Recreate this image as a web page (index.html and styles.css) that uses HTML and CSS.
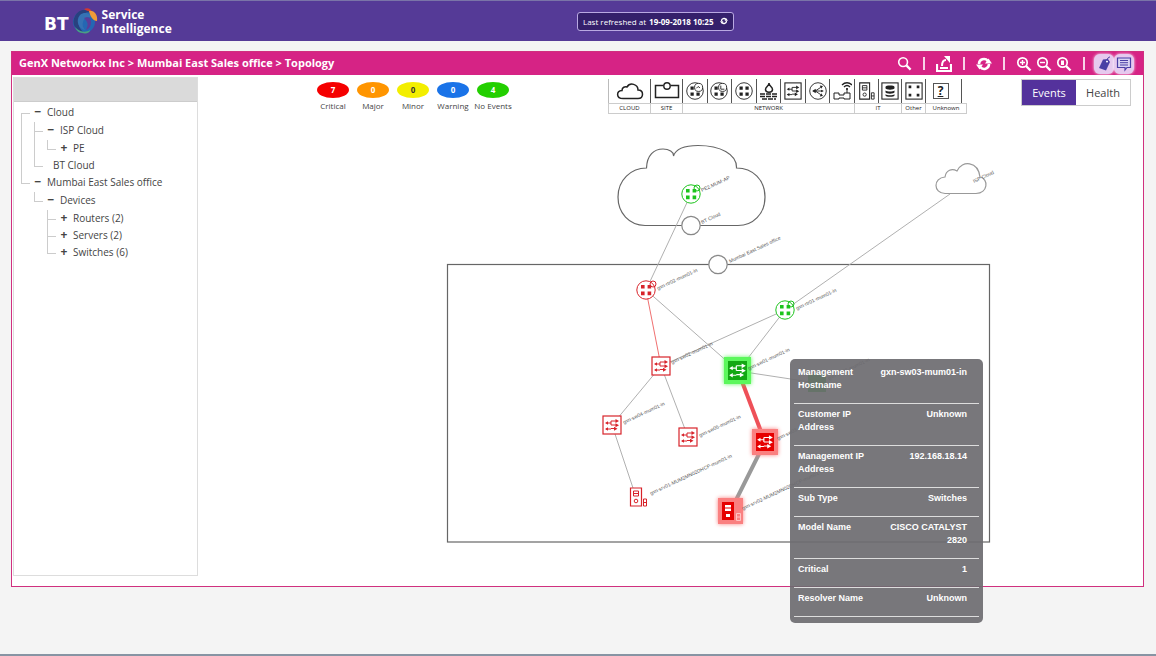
FILE: index.html
```html
<!DOCTYPE html>
<html lang="en">
<head>
  <meta charset="UTF-8" />
  <meta name="viewport" content="width=device-width, initial-scale=1.0"/>
  <title>Service Intelligence - Topology</title>
  <link rel="stylesheet" href="styles.css">
</head>
<body>
  <!-- Shared icon shapes -->
  <svg class="defs" width="0" height="0">
    <defs>
      <symbol id="router" viewBox="0 0 20 20">
        <circle cx="10" cy="10" r="9.2" fill="none" stroke="currentColor"/>
        <path d="M5 5h3.6v3.6H5zM11.6 5h3.6v3.6h-3.6zM5 11.6h3.6v3.6H5zM11.6 11.6h3.6v3.6h-3.6z" fill="currentColor"/>
      </symbol>
      <symbol id="switch" viewBox="0 0 20 20">
        <rect x="1" y="1" width="18" height="18" fill="none" stroke="currentColor" stroke-width="1.2"/>
        <path d="M5 8h4M9 6h5M9 10h6M4 14h5M9 13.500h4M9 6v4" fill="none" stroke="currentColor"/>
        <path d="M13.500 4l3.500 2-3.500 2zM13.500 8.200l3.500 2-3.500 2zM6 6.200v3.600L3 8zM6 12.200v3.600L3 14zM12 11.700l3.500 2-3.500 2z" fill="currentColor"/>
      </symbol>
      <symbol id="server" viewBox="0 0 20 20">
        <path d="M3 1h11v18H3z" fill="none" stroke="currentColor" stroke-width="1.2"/>
        <path d="M6 4h5v5H6zM6 6.5h5" fill="none" stroke="currentColor"/>
        <circle cx="8.5" cy="14" r="1.8" fill="none" stroke="currentColor"/>
        <path d="M16 12h3v7h-3zM16 15.5h3" fill="none" stroke="currentColor"/>
      </symbol>
      <symbol id="zoom" viewBox="0 0 16 16">
        <circle cx="6.5" cy="6.5" r="4.7" fill="none" stroke="currentColor" stroke-width="1.7"/>
        <path d="M10 10l4.5 4.5" stroke="currentColor" stroke-width="2.4"/>
      </symbol>
      <symbol id="refresh" viewBox="0 0 16 16">
        <path d="M3 8c0-5 6-6.500 9-3M13 8c0 5-6 6.500-9 3" fill="none" stroke="currentColor" stroke-width="2.600"/>
        <path d="M9 7.500h7l-3.500-5zM0 8.500h7l-3.500 5z" fill="currentColor"/>
      </symbol>
    </defs>
  </svg>

  <header class="header">
    <div class="brand">
      <span class="brand-bt">BT</span>
      <svg class="globe" viewBox="0 0 28 28">
        <circle cx="13" cy="15" r="11" fill="#2467b3"/>
        <path d="M4 9C8 2 15 2 19 5c-5 0-10 3-11 9-1 4 1 8 4 11C4 24 0 16 4 9z" fill="#28417f"/>
        <path d="M9 8c5-4 11-1 13 3-4-2-9-1-10 4-1 3 0 6 2 8-6-1-10-9-5-15z" fill="#3572b4"/>
        <path d="M13 11c4-2 7 0 7 4s-2 7-5 8c2-4 2-6 1-8-1-2-2-3-3-4z" fill="#5a3d9b"/>
        <path d="M13 2c4-2 7 0 8 3-3-1-5-1-8-3z" fill="#d6372e"/>
        <path d="M18 4c5-1 9 4 8 10-4 0-7-5-8-10z" fill="#f19b38"/>
        <path d="M4 20c4 5 11 6 15 3 0 3-4 4-8 3-3 0-6-3-7-6z" fill="#4aa083"/>
      </svg>
      <span class="brand-name">Service<br>Intelligence</span>
    </div>
    <button class="refreshed">Last refreshed at <b>19-09-2018 10:25</b>
      <svg width="8" height="8"><use href="#refresh"/></svg>
    </button>
  </header>

  <main class="panel">
    <div class="title-bar">
      <h1>GenX Networkx Inc &gt; Mumbai East Sales office &gt; Topology</h1>
      <div class="tools">
        <button aria-label="Search"><svg width="15" height="15"><use href="#zoom"/></svg></button>
        <i class="sep"></i>
        <button aria-label="Export">
          <svg width="16" height="16" viewBox="0 0 16 16"><path d="M1 8v7h14V8M4 12h8" fill="none" stroke="currentColor" stroke-width="2.200"/><path d="M6 10c0-4 2-6 4-6" fill="none" stroke="currentColor" stroke-width="2"/><path d="M8 0h6v7z" fill="currentColor"/></svg>
        </button>
        <i class="sep"></i>
        <button aria-label="Refresh"><svg width="16" height="16"><use href="#refresh"/></svg></button>
        <i class="sep"></i>
        <button aria-label="Zoom in">
          <svg width="16" height="16" viewBox="0 0 16 16"><use href="#zoom"/><path d="M4 6.500h5M6.500 4v5" stroke="currentColor" stroke-width="1.400"/></svg>
        </button>
        <button aria-label="Zoom out">
          <svg width="16" height="16" viewBox="0 0 16 16"><use href="#zoom"/><path d="M4 6.500h5" stroke="currentColor" stroke-width="1.400"/></svg>
        </button>
        <button aria-label="Reset zoom">
          <svg width="16" height="16" viewBox="0 0 16 16"><use href="#zoom"/><path d="M5 4.500h3v4.500H5z" fill="currentColor"/></svg>
        </button>
        <i class="sep"></i>
        <button class="on" aria-label="Labels">
          <svg width="16" height="16" viewBox="0 0 16 16"><path d="M7 3.500l5-.5 2 3-4 8.500L3 12z" fill="currentColor"/><circle cx="11" cy="5.500" r="1" fill="#fff"/><path d="M11 5c0-3 2-4 3-4" fill="none" stroke="currentColor"/></svg>
        </button>
        <button class="on" aria-label="Tooltips">
          <svg width="16" height="16" viewBox="0 0 16 16"><path d="M1.500 2h13v9.500H11L9 14v-2.500H1.500z" fill="#d9d3f2" stroke="currentColor" stroke-width="1.200"/><path d="M4 4.500h8M4 6.700h8M4 9h8" stroke="currentColor"/></svg>
        </button>
      </div>
    </div>

    <div class="content">
      <nav class="sidebar">
        <div class="sidebar-head"></div>
        <ul class="tree">
          <li><button>−</button>Cloud
            <ul>
              <li><button>−</button>ISP Cloud
                <ul>
                  <li><button>+</button>PE</li>
                </ul>
              </li>
              <li class="leaf">BT Cloud</li>
            </ul>
          </li>
          <li><button>−</button>Mumbai East Sales office
            <ul>
              <li><button>−</button>Devices
                <ul>
                  <li><button>+</button>Routers (2)</li>
                  <li><button>+</button>Servers (2)</li>
                  <li><button>+</button>Switches (6)</li>
                </ul>
              </li>
            </ul>
          </li>
        </ul>
      </nav>

      <section class="topology">
        <div class="bar">
          <ul class="legend">
            <li><b class="critical">7</b>Critical</li>
            <li><b class="major">0</b>Major</li>
            <li><b class="minor">0</b>Minor</li>
            <li><b class="warning">0</b>Warning</li>
            <li><b class="none">4</b>No Events</li>
          </ul>

          <div class="palette">
            <div class="group cloud">
              <div class="icons"><span><svg width="28" height="20" viewBox="0 0 28 20"><path d="M7 17.500C0 17.500 0 10 6 9.500 6 6 9 5.500 11 6c3-5 11-3 11 3 6 0 6 8.500 0 8.500z" fill="none" stroke="currentColor" stroke-width="1.500"/></svg></span></div>
              <div class="caption">CLOUD</div>
            </div>
            <div class="group site">
              <div class="icons"><span><svg width="26" height="20" viewBox="0 0 26 20"><path d="M9.500 4.500H1.500v12h23v-12h-8" fill="none" stroke="currentColor" stroke-width="1.500"/><circle cx="13" cy="5" r="3.200" fill="none" stroke="currentColor" stroke-width="1.400"/></svg></span></div>
              <div class="caption">SITE</div>
            </div>
            <div class="group network">
              <div class="icons">
                <span><svg width="18" height="18" viewBox="0 0 20 20"><use href="#router"/><circle cx="14" cy="6" r="4.500" fill="#fff" stroke="currentColor"/><path d="M11.500 7l2-2 2 1.500" fill="none" stroke="currentColor"/></svg></span>
                <span><svg width="18" height="18" viewBox="0 0 20 20"><use href="#router"/><circle cx="14" cy="6" r="4.500" fill="#fff" stroke="currentColor"/><path d="M12 4v4h4" fill="none" stroke="currentColor"/></svg></span>
                <span><svg width="18" height="18"><use href="#router"/></svg></span>
                <span><svg width="20" height="20" viewBox="0 0 20 20"><path d="M10 2c0 3-3.500 4-3.500 6.500 0 3.500 7 3.500 7 0C13.500 6 10 5 10 2z" fill="none" stroke="currentColor" stroke-width="1.500"/><path d="M1 13h18M1 15.500h18M3 18h14" stroke="currentColor" stroke-width="1.500" stroke-dasharray="5 1"/></svg></span>
                <span><svg width="18" height="18"><use href="#switch"/></svg></span>
                <span><svg width="18" height="18" viewBox="0 0 20 20"><circle cx="10" cy="10" r="9.200" fill="none" stroke="currentColor"/><path d="M5 10h10M7 10l6-4M7 10l6 4" fill="none" stroke="currentColor"/><path d="M3.500 10l4-2.500v5zM12 4l3.500.5-2 3zM12 16l3.500-.5-2-3zM13.500 8.500l3 1.500-3 1.500z" fill="currentColor"/></svg></span>
                <span><svg width="20" height="20" viewBox="0 0 20 20"><path d="M2 12h5v2h5v-2h6v6h-6v-1H7v1H2zM15 12V7" fill="none" stroke="currentColor"/><path d="M10 4c3-3 7-3 10 0M12 6c2-2 4-2 6 0" fill="none" stroke="currentColor" stroke-width="1.300"/><circle cx="15" cy="8" r="1" fill="currentColor"/></svg></span>
              </div>
              <div class="caption">NETWORK</div>
            </div>
            <div class="group it">
              <div class="icons">
                <span><svg width="18" height="18"><use href="#server"/></svg></span>
                <span><svg width="18" height="18" viewBox="0 0 20 20"><rect x="1" y="1" width="18" height="18" fill="none" stroke="currentColor" stroke-width="1.200"/><path d="M5 5.500c0-2 10-2 10 0v1.500c0 2-10 2-10 0zM5 9.500c2 1.500 8 1.500 10 0v2c0 2-10 2-10 0zM5 13.500c2 1.500 8 1.500 10 0v1.500c0 2-10 2-10 0z" fill="currentColor"/></svg></span>
              </div>
              <div class="caption">IT</div>
            </div>
            <div class="group other">
              <div class="icons"><span><svg width="18" height="18" viewBox="0 0 20 20"><rect x="1" y="1" width="18" height="18" fill="none" stroke="currentColor" stroke-width="1.200"/><path d="M4 4h3v3H4zM13 4h3v3h-3zM4 13h3v3H4zM13 13h3v3h-3z" fill="currentColor"/></svg></span></div>
              <div class="caption">Other</div>
            </div>
            <div class="group unknown">
              <div class="icons"><span><i class="question">?</i></span></div>
              <div class="caption">Unknown</div>
            </div>
          </div>

          <div class="tabs">
            <button class="active">Events</button>
            <button>Health</button>
          </div>
        </div>

        <div class="canvas">
          <svg class="map" viewBox="199 116 944 470">
            <!-- Cloud and site outlines -->
            <g class="outline">
              <path d="M645 225.500C629 225 618 213 618 197C618 180 631 168 646.500 168C647 155 654 149 663 149C669 149 674 152 673.500 156C676 148 686 145.500 698 145.500C720 145.500 737 154 736.500 168C753 168 765 180 765 197C765 214 753 225.500 738 225.500Z"/>
              <rect x="447.500" y="264.500" width="542" height="277.500"/>
              <path class="thin" d="M945 193.500C933 193 933 178 945 177C946 170 952 168 957 171C962 160 978 161 980 177C989 179 988 193 976 193.500Z"/>
            </g>

            <!-- Links -->
            <g class="links">
              <path d="M691 194L646 290L738 371L785 310L950 194M785 310L661 366L612 425L636 497M661 366L688 437M738 371L817 383"/>
              <path class="red" d="M646 290L661 366"/>
              <path class="wide-red" d="M738 371L765 442"/>
              <path class="wide" d="M765 442L730 512"/>
            </g>

            <g class="outline ports">
              <circle cx="691" cy="225.500" r="9.200"/>
              <circle cx="718" cy="264.500" r="9.200"/>
            </g>

            <!-- Nodes -->
            <g class="green">
              <circle cx="691" cy="194" r="9" fill="#fff"/>
              <use href="#router" x="681" y="184" width="20" height="20"/>
              <circle class="mark" cx="697" cy="188" r="3"/>
              <circle cx="785" cy="310" r="9" fill="#fff"/>
              <use href="#router" x="775" y="300" width="20" height="20"/>
              <circle class="mark" cx="791" cy="304" r="3"/>
              <rect class="solid" x="808" y="374" width="18" height="18"/>
            </g>
            <g class="red-node">
              <circle cx="646" cy="290" r="9" fill="#fff"/>
              <use href="#router" x="636" y="280" width="20" height="20"/>
              <circle class="mark" cx="653" cy="284" r="3"/>
              <rect x="652" y="357" width="18" height="18" fill="#fff"/>
              <use href="#switch" x="651" y="356" width="20" height="20"/>
              <rect x="603" y="416" width="18" height="18" fill="#fff"/>
              <use href="#switch" x="602" y="415" width="20" height="20"/>
              <rect x="679" y="428" width="18" height="18" fill="#fff"/>
              <use href="#switch" x="678" y="427" width="20" height="20"/>
              <rect x="629" y="488" width="13" height="18" fill="#fff"/>
              <use href="#server" x="627" y="487" width="21" height="20"/>
            </g>

            <!-- Highlighted path -->
            <rect class="glow-green" x="724" y="357" width="27" height="27"/>
            <rect x="728" y="361" width="19" height="19" fill="#12a812"/>
            <svg class="white" x="728" y="361" width="19" height="19" viewBox="2 2 16 16"><use href="#switch" width="20" height="20"/></svg>
            <rect class="glow-red" x="752" y="429" width="26" height="26"/>
            <rect x="756" y="433" width="18" height="18" fill="#e60000"/>
            <svg class="white" x="756" y="433" width="18" height="18" viewBox="2 2 16 16"><use href="#switch" width="20" height="20"/></svg>
            <rect class="glow-red" x="718" y="498" width="25" height="26"/>
            <rect x="722" y="502" width="12" height="18" fill="#e60000"/>
            <path d="M725 505h6v6h-6zM726 514h4v3h-4z" fill="#fff"/>
            <path d="M725 508h6" stroke="#e60000"/>
            <path d="M736.500 513.500h4v7h-4zM736.500 517h4" fill="none" stroke="#ffc4c4"/>

            <!-- Node names -->
            <g class="names">
              <text transform="translate(702 192) rotate(-25)">PE2.MUM-AP</text>
              <text transform="translate(702 224) rotate(-25)">BT Cloud</text>
              <text transform="translate(730 263) rotate(-25)">Mumbai East Sales office</text>
              <text transform="translate(658 290) rotate(-25)">gxn-rtr02-mum01-in</text>
              <text transform="translate(797 310) rotate(-25)">gxn-rtr01-mum01-in</text>
              <text transform="translate(672 364) rotate(-25)">gxn-sw02-mum01-in</text>
              <text transform="translate(749 370) rotate(-25)">gxn-sw01-mum01-in</text>
              <text transform="translate(829 380) rotate(-25)">gxn-sw06-mum01-in</text>
              <text transform="translate(624 424) rotate(-25)">gxn-sw04-mum01-in</text>
              <text transform="translate(700 437) rotate(-25)">gxn-sw05-mum01-in</text>
              <text transform="translate(778 440) rotate(-25)">gxn-sw03-mum01-in</text>
              <text transform="translate(651 495) rotate(-25)">gxn-srv01-MUM2MN02DHCP-mum01-in</text>
              <text transform="translate(743 510) rotate(-25)">gxn-srv02-MUM2MN02DHCP-mum01-in</text>
              <text transform="translate(974 183) rotate(-25)">ISP Cloud</text>
            </g>
          </svg>

          <dl class="tooltip">
            <div><dt>Management Hostname</dt><dd>gxn-sw03-mum01-in</dd></div>
            <div><dt>Customer IP Address</dt><dd>Unknown</dd></div>
            <div><dt>Management IP Address</dt><dd>192.168.18.14</dd></div>
            <div><dt>Sub Type</dt><dd>Switches</dd></div>
            <div><dt>Model Name</dt><dd>CISCO CATALYST 2820</dd></div>
            <div><dt>Critical</dt><dd>1</dd></div>
            <div><dt>Resolver Name</dt><dd>Unknown</dd></div>
          </dl>
        </div>
      </section>
    </div>
  </main>

  <footer class="footer"></footer>
</body>
</html>
```

FILE: styles.css
```css
* { box-sizing: border-box; }
body {
  margin: 0;
  min-height: 100vh;
  display: flex;
  flex-direction: column;
  background: #f4f4f4;
  font-family: "Open Sans", "Noto Sans", sans-serif;
  font-size: 10px;
  color: #444;
}
ul, dl, dd, h1 { margin: 0; padding: 0; }
ul { list-style: none; }
button {
  font-family: inherit;
  border: none;
  background: none;
  padding: 0;
  color: inherit;
  cursor: pointer;
}
svg { display: block; }
.defs { position: absolute; }

/* Header */
.header {
  display: flex;
  align-items: center;
  height: 41px;
  background: #553a97;
  border-top: 1px solid #7a74a8;
  color: #fff;
}
.brand {
  width: 50%;
  padding-left: 44px;
  display: flex;
  align-items: center;
}
.brand-bt {
  font-family: "DejaVu Sans", sans-serif;
  font-weight: bold;
  font-size: 17px;
  margin-top: 5px;
}
.globe { width: 28px; height: 28px; margin-left: 2px; }
.brand-name {
  font-weight: bold;
  font-size: 12px;
  line-height: 14px;
  margin: 2px 0 0 3px;
}
.refreshed {
  display: flex;
  align-items: center;
  gap: 3px;
  height: 19px;
  margin-left: -1px;
  padding: 0 5px;
  border: 1px solid #b9a9e2;
  border-radius: 3px;
  background: #34206b;
  color: #fff;
  font-size: 8px;
}
.refreshed svg { margin-left: 4px; }

/* Panel */
.panel {
  margin: 10px 12px 0 11px;
  border: 1px solid #d0307f;
  background: #fff;
}
.title-bar {
  display: flex;
  align-items: center;
  justify-content: space-between;
  height: 23px;
  padding: 0 8px 0 7px;
  background: #d62385;
  color: #fff;
}
.title-bar h1 {
  padding-bottom: 2px;
  font-size: 11px;
  font-weight: 700;
}
.tools { display: flex; align-items: center; margin-right: 1px; }
.tools button, .sep {
  width: 20px;
  height: 20px;
  display: flex;
  align-items: center;
  justify-content: center;
}
.sep::before {
  content: "";
  width: 2px;
  height: 13px;
  background: #f7d3e7;
}
.tools .on {
  color: #4a3fa5;
  background: #e6c9ee;
  border-radius: 6px;
  box-shadow: 0 0 3px #fff;
}
.content { display: flex; }

/* Tree */
.sidebar {
  width: 185px;
  min-height: 499px;
  margin: 2px 1px 10px 1px;
  border: 1px solid #ddd;
  flex-shrink: 0;
}
.sidebar-head {
  height: 24px;
  background: #dadada;
  border-bottom: 1px solid #ccc;
}
.tree {
  padding: 2px 0 0 7px;
  font-size: 10px;
  line-height: 17px;
}
.tree ul { padding-top: 1px; }
.tree li {
  position: relative;
  padding-left: 13px;
}
.tree li button {
  display: inline-block;
  width: 8px;
  height: 15px;
  margin-right: 5px;
  font-size: 12px;
  font-weight: bold;
  line-height: 15px;
}
.tree .leaf { padding-left: 19px; }
.tree li::before {
  content: "";
  position: absolute;
  left: 0;
  top: 0;
  height: 100%;
  border-left: 1px solid #ccc;
}
.tree li::after {
  content: "";
  position: absolute;
  left: 0;
  top: 9px;
  width: 9px;
  border-top: 1px solid #ccc;
}
.tree > li:first-child::before { top: 9px; }
.tree li:last-child::before { height: 9px; }

/* Legend, icon palette and tabs */
.topology { flex: 1; min-width: 0; }
.bar {
  display: flex;
  align-items: flex-start;
  height: 41px;
  padding: 4px 12px 0 114px;
}
.legend {
  display: flex;
  margin-top: 3px;
  text-align: center;
  font-size: 8px;
  line-height: 12px;
}
.legend li { width: 40px; white-space: nowrap; }
.legend b {
  display: block;
  width: 32px;
  height: 16px;
  margin: 0 auto 2px;
  border-radius: 50%;
  color: #fff;
  line-height: 16px;
}
.critical { background: #f50000; }
.major { background: #ff9500; }
.legend .minor { background: #f3ee00; color: #333; }
.warning { background: #1a73e8; }
.none { background: #23cf00; }

.palette {
  display: flex;
  margin-left: 95px;
  color: #222;
}
.icons {
  display: flex;
  height: 24px;
  border-left: 1px solid #bbb;
}
.icons span {
  flex: 1;
  display: flex;
  align-items: center;
  justify-content: center;
  border-right: 1px solid #555;
}
.caption {
  border: 1px solid #ccc;
  border-left-width: 0;
  font-size: 6px;
  line-height: 9px;
  text-align: center;
}
.group:first-child .caption { border-left-width: 1px; }
.group + .group .icons { border-left: none; }
.cloud { width: 43px; }
.site { width: 32px; }
.network { width: 172px; }
.it { width: 47px; }
.other { width: 24px; }
.unknown { width: 41px; }
.unknown .icons { margin-right: 5px; }
.unknown .icons span { padding-right: 6px; }
.question {
  width: 16px;
  height: 16px;
  border: 1px solid #555;
  font-size: 12px;
  line-height: 14px;
  font-style: normal;
  font-weight: bold;
  text-align: center;
  text-decoration: underline;
}
.tabs {
  display: flex;
  margin-left: auto;
  border: 1px solid #ccc;
}
.tabs button {
  width: 54px;
  height: 25px;
  font-size: 11px;
}
.tabs .active { background: #54329c; color: #fff; }

/* Topology map */
.canvas { position: relative; }
.map { width: 100%; }
.outline { fill: none; stroke: #666; stroke-width: 1.2; }
.outline .thin { stroke: #999; }
.ports { fill: #fff; stroke: #888; }
.links { fill: none; stroke: #b0b0b0; }
.links .red { stroke: #f07070; }
.links .wide-red { stroke: #ee5058; stroke-width: 4; }
.links .wide { stroke: #999; stroke-width: 4; }
.green { color: #1cc41c; }
.red-node { color: #d8232a; }
.mark { fill: none; stroke: currentColor; }
.solid { fill: currentColor; }
.white { color: #fff; }
.glow-green { fill: #5cf75c; filter: drop-shadow(0 0 2px #5cf75c); }
.glow-red { fill: #fa8080; filter: drop-shadow(0 0 2px #fa8080); }
.names {
  font-family: "Liberation Sans", sans-serif;
  font-size: 5px;
  fill: #555;
}
.tooltip {
  position: absolute;
  top: 243px;
  left: 591px;
  width: 193px;
  padding: 3px 4px 6px;
  border-radius: 5px;
  background: rgba(108, 107, 112, 0.92);
  color: #fff;
  font-family: "Liberation Sans", sans-serif;
  font-size: 9px;
  font-weight: bold;
  line-height: 13px;
}
.tooltip div {
  display: flex;
  justify-content: space-between;
  padding: 4px 12px 11px 4px;
  border-bottom: 1px solid #ddd;
}
.tooltip dt { width: 70px; }
.tooltip dd { width: 90px; text-align: right; }

.footer {
  height: 2px;
  margin-top: auto;
  background: #8794a3;
}
```
